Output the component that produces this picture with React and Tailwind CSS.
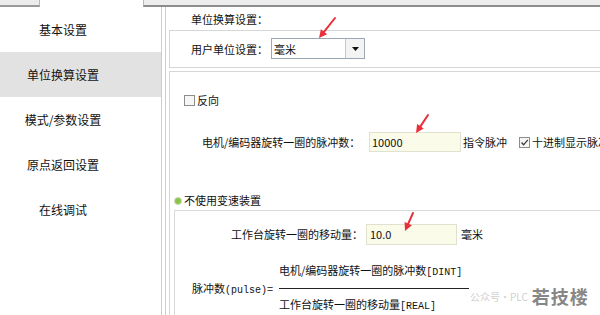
import React from 'react';

const FONT = { fontFamily: '"Noto Sans CJK SC", "Liberation Sans", sans-serif' };
const MONO = { fontFamily: '"Liberation Mono", monospace' };

const navItems = ['基本设置', '单位换算设置', '模式/参数设置', '原点返回设置', '在线调试'];

const RedArrow = ({ x1, y1, x2, y2 }) => {
  const ang = Math.atan2(y2 - y1, x2 - x1);
  const len = 8;
  const w = 4;
  const bx = x2 - len * Math.cos(ang);
  const by = y2 - len * Math.sin(ang);
  const px = -Math.sin(ang) * w;
  const py = Math.cos(ang) * w;
  return (
    <g>
      <line x1={x1} y1={y1} x2={bx} y2={by} stroke="#e8303a" strokeWidth="2" strokeLinecap="round" />
      <polygon points={`${x2},${y2} ${bx + px},${by + py} ${bx - px},${by - py}`} fill="#e8303a" />
    </g>
  );
};

const Check = ({ checked }) => (
  <span className="inline-flex shrink-0 w-[11px] h-[11px] border border-[#8d8d8d] bg-[#f6f6f6] items-center justify-center">
    {checked && (
      <svg width="9" height="9" viewBox="0 0 9 9">
        <path d="M1.5 4.5 L3.6 6.8 L7.8 1.8" fill="none" stroke="#3c3c3c" strokeWidth="1.3" />
      </svg>
    )}
  </span>
);

export default function App() {
  return (
    <div className="relative w-[600px] h-[315px] overflow-hidden bg-white text-[#111] text-[11px]" style={FONT}>
      {/* tab strip */}
      <div className="flex h-[7px]">
        <div className="w-[40px] shrink-0 bg-[#ececec] border-b-2 border-[#9a9a9a] border-r border-r-[#b8b8b8]" />
        <div className="w-[103px] shrink-0 bg-white" />
        <div className="flex-1 bg-[#ededed] border-l border-[#b8b8b8] border-b-2 border-b-[#8c8c8c]" />
      </div>

      <div className="flex h-[308px]">
        {/* sidebar */}
        <div className="w-[161px] shrink-0 flex flex-col">
          {navItems.map((item, i) => (
            <div key={item} className={`h-[45px] flex items-center ${i === 1 ? 'bg-[#e2e2e2]' : ''}`}>
              <span className="w-[126px] text-center text-[12px] leading-none">{item}</span>
            </div>
          ))}
        </div>
        <div className="w-[5px] shrink-0 border-l border-r border-[#cdcdcd]" />

        {/* main */}
        <div className="flex-1 min-w-0 flex flex-col pl-[3px]">
          <div className="h-[24px] flex items-center pl-[22px] pt-[2px]">单位换算设置：</div>

          <div className="h-[40px] border border-r-0 border-[#d6d6d6] flex items-center pl-[21px]">
            <span className="w-[80px] shrink-0">用户单位设置：</span>
            <div className="flex h-[21px] w-[94px] shrink-0 border border-[#9ba7b4] bg-white">
              <span className="flex-1 pl-[2px] flex items-center">毫米</span>
              <span className="w-[19px] border-l border-[#c8c8c8] bg-[#f4f4f4] flex items-center justify-center">
                <svg width="7" height="4" viewBox="0 0 7 4"><path d="M0 0 H7 L3.5 4 Z" fill="#111" /></svg>
              </span>
            </div>
          </div>

          <div className="mt-[3px] flex-1 border border-r-0 border-b-0 border-[#d6d6d6] flex flex-col">
            <div className="h-[34px] flex items-end pl-[14px] gap-[2px]">
              <Check />
              <span className="leading-none">反向</span>
            </div>

            <div className="mt-[26px] h-[20px] flex items-center pl-[32px] whitespace-nowrap">
              <span className="w-[167px] shrink-0">电机/编码器旋转一圈的脉冲数：</span>
              <span className="w-[92px] shrink-0 h-[20px] bg-[#fbfbea] border border-[#e1e1cf] flex items-center pl-[2px]">10000</span>
              <span className="ml-[2px] w-[56px] shrink-0">指令脉冲</span>
              <Check checked />
              <span className="ml-[2px]">十进制显示脉冲</span>
            </div>

            <div className="mt-[43px] flex items-center pl-[4px] gap-[2px] leading-none">
              <span className="w-[8px] h-[8px] rounded-full bg-[#8bc34a] border border-[#c9ddb0]" />
              <span>不使用变速装置</span>
            </div>

            <div className="mt-[4px] ml-[4px] flex-1 border border-r-0 border-b-0 border-[#d9d9d9] flex flex-col">
              <div className="mt-[13px] h-[21px] flex items-center pl-[56px] whitespace-nowrap">
                <span className="w-[135px] shrink-0">工作台旋转一圈的移动量：</span>
                <span className="w-[91px] shrink-0 h-[21px] bg-[#fbfbea] border border-[#e1e1cf] flex items-center pl-[3px]">10.0</span>
                <span className="ml-[4px]">毫米</span>
              </div>

              <div className="mt-[17px] flex items-center pl-[17px]">
                <span className="w-[87px] shrink-0 whitespace-nowrap">
                  脉冲数<span style={MONO} className="text-[10px]">(pulse)</span>=
                </span>
                <div className="flex flex-col w-[190px] shrink-0">
                  <span className="whitespace-nowrap leading-[16px]">
                    电机/编码器旋转一圈的脉冲数<span style={MONO} className="text-[10px]">[DINT]</span>
                  </span>
                  <span className="my-[7px] h-[1px] bg-[#222]" />
                  <span className="whitespace-nowrap leading-[16px]">
                    工作台旋转一圈的移动量<span style={MONO} className="text-[10px]">[REAL]</span>
                  </span>
                </div>
              </div>
            </div>
          </div>
        </div>
      </div>

      {/* watermark */}
      <div className="absolute left-[470px] top-[283px] flex items-center gap-[4px] pointer-events-none whitespace-nowrap">
        <span className="text-[10px] text-[#d0d0d0]">公众号·PLC</span>
        <span className="text-[18px] font-bold text-[#6a6a6a] opacity-80 tracking-[1px]">若技楼</span>
      </div>

      {/* red annotation arrows */}
      <svg className="absolute left-0 top-0 pointer-events-none" width="600" height="315">
        <RedArrow x1={335} y1={18} x2={319} y2={38} />
        <RedArrow x1={428} y1={115} x2={416} y2={133} />
        <RedArrow x1={413} y1={213} x2={405} y2={231} />
      </svg>
    </div>
  );
}
